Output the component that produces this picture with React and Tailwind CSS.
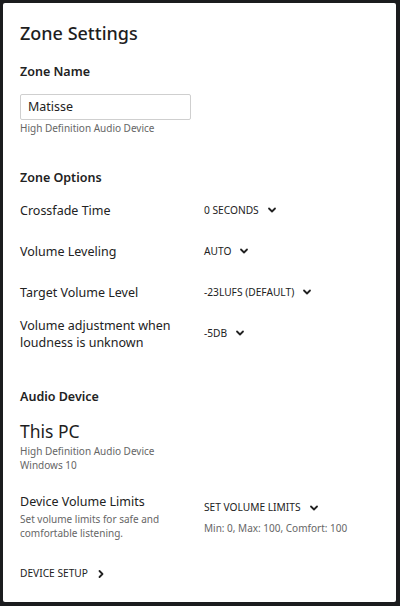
import React from "react";

const Chevron = ({ dir = "down" }) => (
  <svg
    width="10"
    height="10"
    viewBox="0 0 10 10"
    className="shrink-0"
    fill="none"
    stroke="#222"
    strokeWidth="1.8"
    strokeLinecap="round"
    strokeLinejoin="round"
  >
    {dir === "down" ? <path d="M2 3.5 L5 6.5 L8 3.5" /> : <path d="M3.5 2 L6.5 5 L3.5 8" />}
  </svg>
);

const Dropdown = ({ value }) => (
  <div className="flex items-center gap-[8px] text-[10.2px] text-[#222] uppercase">
    <span>{value}</span>
    <Chevron />
  </div>
);

const OptionRow = ({ label, value }) => (
  <div className="flex items-center h-[41px]">
    <div className="w-[184px] text-[12.5px] leading-[17px] text-[#222]">{label}</div>
    <Dropdown value={value} />
  </div>
);

export default function App() {
  return (
    <div
      className="h-[606px] w-[400px] bg-[#1b1c1e] pl-[3px] pr-[4px] pt-[3px] pb-[4px]"
      style={{ fontFamily: '"Noto Sans", "Open Sans", sans-serif' }}
    >
      <div className="h-full w-full bg-white rounded-[2px] px-[17px] pt-[16px]">
        <h1 className="text-[18px] leading-[28px] font-medium text-[#1e1e1e]">Zone Settings</h1>

        <h2 className="mt-[16px] text-[12.5px] leading-[18px] font-semibold text-[#222]">Zone Name</h2>
        <div className="mt-[13px] w-[171px] h-[26px] border border-[#cfcfcf] rounded-[2px] flex items-center px-[7px] pt-[1px] text-[12.5px] text-[#222]">
          Matisse
        </div>
        <div className="mt-[1px] text-[10px] leading-[14px] text-[#666]">High Definition Audio Device</div>

        <h2 className="mt-[34px] text-[12.5px] leading-[18px] font-semibold text-[#222]">Zone Options</h2>
        <div className="mt-[3px]">
          <OptionRow label="Crossfade Time" value="0 Seconds" />
          <OptionRow label="Volume Leveling" value="Auto" />
          <OptionRow label="Target Volume Level" value="-23LUFS (Default)" />
          <OptionRow
            label={
              <>
                Volume adjustment when
                <br />
                loudness is unknown
              </>
            }
            value="-5dB"
          />
        </div>

        <h2 className="mt-[34px] text-[12.5px] leading-[18px] font-semibold text-[#222]">Audio Device</h2>
        <div className="mt-[13px] text-[17.5px] leading-[24px] text-[#1e1e1e]">This PC</div>
        <div className="mt-[1px] text-[10px] leading-[14px] text-[#666]">
          <div>High Definition Audio Device</div>
          <div>Windows 10</div>
        </div>

        <div className="mt-[21px] flex">
          <div className="w-[184px]">
            <div className="text-[12.5px] leading-[18px] text-[#222]">Device Volume Limits</div>
            <div className="mt-[1px] text-[10px] leading-[14px] text-[#666]">
              Set volume limits for safe and
              <br />
              comfortable listening.
            </div>
          </div>
          <div className="pt-[7px]">
            <Dropdown value="Set Volume Limits" />
            <div className="mt-[6px] text-[10px] leading-[14px] text-[#666]">Min: 0, Max: 100, Comfort: 100</div>
          </div>
        </div>

        <div className="mt-[26px] flex items-center gap-[8px] text-[10.2px] text-[#222] uppercase">
          <span>Device Setup</span>
          <Chevron dir="right" />
        </div>
      </div>
    </div>
  );
}
